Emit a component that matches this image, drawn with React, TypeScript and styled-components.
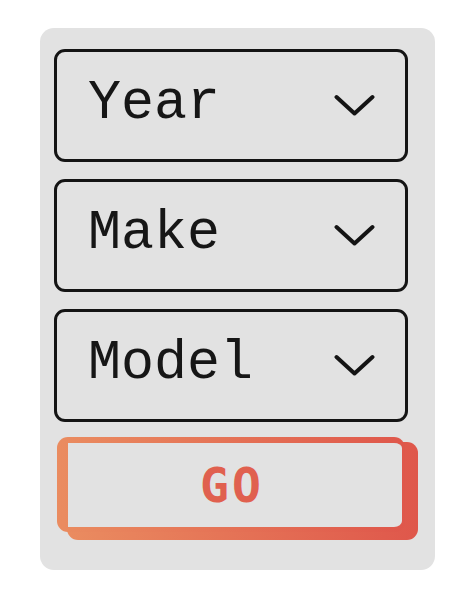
import React from 'react';
import styled, { createGlobalStyle } from 'styled-components';

const GlobalStyle = createGlobalStyle`
	body {
		margin: 0;
		background: #ffffff;
	}
`;

const Page = styled.div`
	padding: 28px 0 0 40px;
`;

const Card = styled.div`
	box-sizing: border-box;
	width: 395px;
	height: 542px;
	padding: 21px 27px 0 14px;
	background-color: #e2e2e2;
	border-radius: 14px;
	display: flex;
	flex-direction: column;
	gap: 17px;
`;

const Select = styled.div`
	box-sizing: border-box;
	height: 113px;
	border: 3.5px solid #141414;
	border-radius: 11px;
	padding: 0 30px 0 31px;
	display: flex;
	align-items: center;
	justify-content: space-between;
	cursor: pointer;
`;

const Label = styled.span`
	font-family: 'Liberation Mono', monospace;
	font-size: 55px;
	color: #161616;
	line-height: 1;
	margin-top: -4px;
`;

const GoWrap = styled.div`
	position: relative;
	width: 348px;
	height: 95px;
	margin: -2px 0 0 3px;

	&::before {
		content: '';
		position: absolute;
		left: 10px;
		top: 5px;
		right: -13px;
		bottom: -8px;
		border-radius: 11px;
		background: linear-gradient(90deg, #ea8c60, #df574b);
	}
`;

const GoButton = styled.button`
	position: relative;
	box-sizing: border-box;
	width: 100%;
	height: 100%;
	border-style: solid;
	border-color: transparent;
	border-width: 6px 3px 5px 11px;
	border-radius: 11px;
	background:
		linear-gradient(#e2e2e2, #e2e2e2) padding-box,
		linear-gradient(90deg, #ea8c60, #df574b) border-box;
	font-family: 'DejaVu Sans Mono', monospace;
	font-weight: 700;
	font-size: 48px;
	letter-spacing: 3px;
	color: #e0604f;
	cursor: pointer;
	padding: 0 6px 0 0;
`;

const Chevron = () => (
	<svg width="41" height="23" viewBox="0 0 41 23" fill="none">
		<polyline
			points="2.5,3 20.5,19.5 38.5,3"
			stroke="#141414"
			strokeWidth="4"
			strokeLinecap="round"
			strokeLinejoin="round"
		/>
	</svg>
);

const fields = [ 'Year', 'Make', 'Model' ];

export default function App() {
	return (
		<Page>
			<GlobalStyle />
			<Card>
				{fields.map((f) => (
					<Select key={f}>
						<Label>{f}</Label>
						<Chevron />
					</Select>
				))}
				<GoWrap>
					<GoButton>GO</GoButton>
				</GoWrap>
			</Card>
		</Page>
	);
}
